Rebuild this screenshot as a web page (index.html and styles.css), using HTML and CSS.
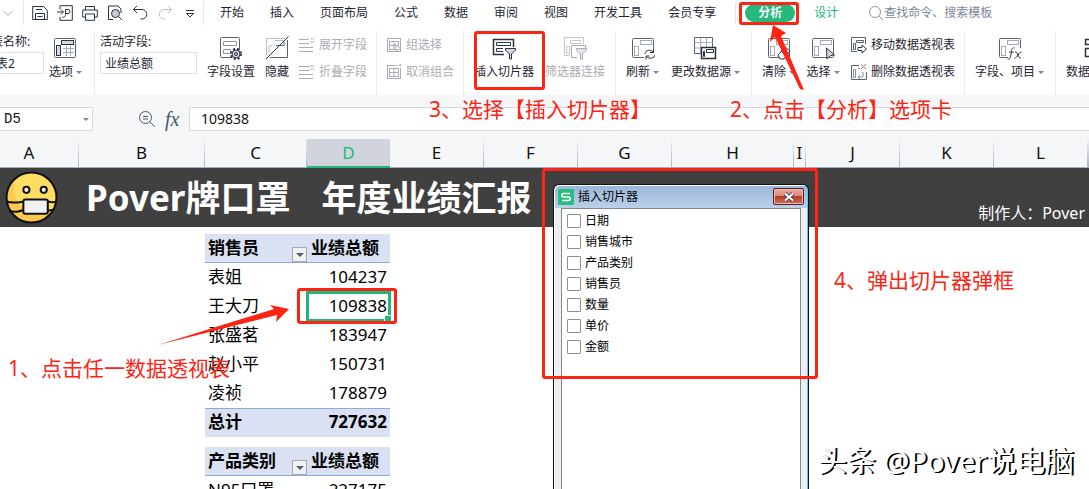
FILE: index.html
```html
<!DOCTYPE html>
<html lang="zh-CN">
<head>
    <meta charset="UTF-8">
    <meta name="viewport" content="width=device-width, initial-scale=1.0">
    <title>Pover牌口罩 年度业绩汇报</title>
    <link rel="stylesheet" href="styles.css">
</head>
<body>
    <!-- shared icons -->
    <svg class="sprite" width="0" height="0">
        <symbol id="pivot" viewBox="0 0 24 24">
            <rect x="1.500" y="2.500" width="21" height="19" rx="1" stroke="#596273"/>
            <rect x="9.500" y="4.500" width="11" height="4" stroke="#a4abb8"/>
            <rect x="3.500" y="10.500" width="4" height="9" stroke="#a4abb8"/>
        </symbol>
        <symbol id="grid-table" viewBox="0 0 16 16">
            <rect x="1.500" y="1.500" width="13" height="13"/>
            <rect x="3.500" y="4.500" width="9" height="8"/>
            <path d="M3.500 8.500h9M8 4.500v8"/>
        </symbol>
    </svg>

    <header class="menu-bar">
        <div class="quick-access">
            <button class="icon-btn small" aria-label="展开"><svg viewBox="0 0 12 16"><path d="M1.500 6 6 10.500 10.500 6" stroke="#a0a5ae"/></svg></button>
            <span class="divider"></span>
            <button class="icon-btn" aria-label="保存"><svg viewBox="0 0 16 16"><path d="M.7 1.500h10.800l3.800 3.800v9.200H.7zM3.500 14.500v-6h9v6M4 4.500h6M5.500 11.500h5"/></svg></button>
            <button class="icon-btn" aria-label="导出"><svg viewBox="0 0 16 16"><path d="M3 4V.7h12.300v14.600H3V12M0 7h6M4 4.500 6.500 7 4 9.500M8.500 9.500V4.500h2.500a2 2 0 0 1 0 4H8.500M8.500 9.500c0 3-2 3-3.500 2.500"/></svg></button>
            <button class="icon-btn" aria-label="打印"><svg viewBox="0 0 16 16"><path d="M3.500 5V1.500h9V5M3.500 12H.7V5h14.600v7h-2.800M3.500 9h9v6.300h-9z"/></svg></button>
            <button class="icon-btn" aria-label="打印预览"><svg viewBox="0 0 16 16"><path d="M6 14.500H1.500V1h9.500l3 3v4"/><circle cx="8.500" cy="8.500" r="4" fill="#c9cdd4"/><path d="m11.500 11.500 3.500 3.500"/></svg></button>
            <button class="icon-btn" aria-label="撤销"><svg viewBox="0 0 16 16"><path d="M5 .8 1.500 4.500 5 8M1.500 4.500H10a4.300 4.300 0 0 1 0 9.500H8.500"/></svg></button>
            <button class="icon-btn" aria-label="恢复" disabled><svg viewBox="0 0 16 16"><path d="m11 .8 3.500 3.700L11 8M14.500 4.500H7a4.300 4.300 0 0 0 0 9.500h1" stroke="#bcc0c7"/></svg></button>
            <button class="icon-btn" aria-label="更多"><svg viewBox="0 0 16 16"><path d="M4 5.500h8M4.500 8.500 8 12l3.500-3.500z"/></svg></button>
            <span class="divider last"></span>
        </div>
        <nav class="tabs">
            <a href="#">开始</a>
            <a href="#">插入</a>
            <a href="#">页面布局</a>
            <a href="#">公式</a>
            <a href="#">数据</a>
            <a href="#">审阅</a>
            <a href="#">视图</a>
            <a href="#">开发工具</a>
            <a href="#">会员专享</a>
        </nav>
        <nav class="tool-tabs">
            <a href="#" class="active">分析<span class="mark"></span></a>
            <a href="#">设计</a>
        </nav>
        <label class="search">
            <svg viewBox="0 0 16 16" width="16" height="16"><circle cx="7" cy="7" r="5.500"/><path d="m11 11 4 4"/></svg>
            <input type="text" placeholder="查找命令、搜索模板">
        </label>
    </header>

    <div class="ribbon">
        <div class="group first">
            <label class="field cut">表名称:<input type="text" value="表2"></label>
            <button class="tool">
                <svg viewBox="0 0 24 24"><rect x="1.500" y="2.500" width="21" height="19" rx="1" stroke="#596273"/><rect x="8.500" y="4.500" width="12" height="4" fill="#d5d8de"/><rect x="3.500" y="9.500" width="4" height="10" fill="#d5d8de"/><path d="M10 12.500h11M10 16.500h11M13.500 10v10M17.500 10v10" stroke="#a4abb8"/></svg>
                <span class="drop">选项</span>
            </button>
        </div>
        <div class="group fields">
            <label class="field">活动字段:<input type="text" value="业绩总额"></label>
            <button class="tool">
                <svg viewBox="0 0 24 24"><rect x="1.500" y="1.500" width="19" height="20" rx="1" stroke="#596273"/><path d="M4.500 5.500h13v4h-13zM4.500 13.500h7v4h-7z" stroke="#8d95a3"/><circle cx="17" cy="18" r="5" fill="#fff" stroke-dasharray="2 2" stroke-width="2"/><circle cx="17" cy="18" r="4" fill="#d5d8de"/><circle cx="17" cy="18" r="1.500"/></svg>
                <span>字段设置</span>
            </button>
            <button class="tool">
                <svg viewBox="0 0 24 24"><path d="M1.500 19V2.500H20M10 4.500h10M4 17v-7h3" stroke="#b9bec8"/><path d="M22.500 4v17.500H5M11 9.500h8V6" stroke="#596273"/><path d="M1 23 23.500 .5"/></svg>
                <span>隐藏</span>
            </button>
            <div class="stack">
                <button class="mini" disabled><svg viewBox="0 0 16 16"><path d="M0 2.500h10M0 6.500h10M0 10.500h14M0 14.500h14M11 .5 13 2.500 15 .5M11 4 13 6 15 4"/></svg>展开字段</button>
                <button class="mini" disabled><svg viewBox="0 0 16 16"><path d="M0 2.500h10M0 6.500h10M0 10.500h14M0 14.500h14M11 3 13 1 15 3M11 6.500 13 4.500 15 6.500"/></svg>折叠字段</button>
            </div>
        </div>
        <div class="group combine">
            <div class="stack">
                <button class="mini" disabled><svg viewBox="0 0 16 16"><use href="#grid-table"/><path d="m9.500 7 5.500 5-2.500.3-2 2.500z" fill="#fff"/></svg>组选择</button>
                <button class="mini" disabled><svg viewBox="0 0 16 16"><use href="#grid-table"/><path d="M12 0v2M14 3h2" stroke="#fff" stroke-width="2"/><path d="m13 2 2-2"/></svg>取消组合</button>
            </div>
        </div>
        <div class="group slicer">
            <button class="tool">
                <svg viewBox="0 0 24 24"><path d="M12 18.500H1.500v-15h20V11" stroke-width="1.500"/><path d="M4.500 6.500h14v3h-14zM11 12.500H4.500v3H11"/><path d="M13.500 12.500h10v1.500l-4 4v5h-2v-5l-4-4z" fill="#d5d8de"/></svg>
                <span>插入切片器</span>
                <i class="mark"></i>
            </button>
            <button class="tool" disabled>
                <svg viewBox="0 0 24 24"><path d="M7 19.500H1.500v-18h19V8M7.500 4.500h10v3h-10zM3.500 10.500h3v7h-3z" stroke="#c3c6cc"/><path d="M14 21.500H8.500v-12h14V12"/><path d="M13.500 12.500h10v1.500l-4 4v5h-2v-5l-4-4z" fill="#e3e5e9"/></svg>
                <span>筛选器连接</span>
            </button>
        </div>
        <div class="group source">
            <button class="tool">
                <svg viewBox="0 0 24 24"><use href="#pivot"/><path d="M13 13h11v11H13z" fill="#fff" stroke="none"/><path d="M14 18c0-4 6-5 8-2M22.500 13v3.500H19M24 18.500c0 4-6 5-8.500 2M15 23.500V20h3.500"/></svg>
                <span class="drop">刷新</span>
            </button>
            <button class="tool">
                <svg viewBox="0 0 24 24"><path d="M1.500 1.500h18v16h-18z" stroke="#596273"/><path d="M1.500 6.500h18M1.500 12h18M7.500 1.500v16M13.500 1.500v16" stroke="#a4abb8"/><path d="M8.500 11.500h14v11h-14z" fill="#fff" stroke-width="1.500"/><path d="M13.500 13.500h7v3h-7zM10.500 15.500h1v5h-1z"/></svg>
                <span class="drop">更改数据源</span>
            </button>
        </div>
        <div class="group actions">
            <button class="tool">
                <svg viewBox="0 0 24 24"><use href="#pivot"/><path d="m11 19 7-8 5 4-6 8h-4z" fill="#fff"/><path d="m14 15 6 5"/></svg>
                <span class="drop">清除</span>
            </button>
            <button class="tool">
                <svg viewBox="0 0 24 24"><use href="#pivot"/><path d="m15.500 12 8 7-4 .5-3.500 3.500z" fill="#d5d8de"/></svg>
                <span class="drop">选择</span>
            </button>
            <div class="stack">
                <button class="mini"><svg viewBox="0 0 16 16"><path d="M6 14.500H.5V.5h14V7M5.500 3.500h7v2h-7zM2.500 6.500h2v6h-2z" stroke="#596273"/><path d="M7 10.500h4V8l4.500 4-4.500 4v-2.500H7z"/></svg>移动数据透视表</button>
                <button class="mini"><svg viewBox="0 0 16 16"><path d="M8 1.500H.5v14h15V8" stroke="#596273"/><path d="M2.500 5.500h2v8h-2zM7 4.500h2M7 13h5V8M9 11l-2 2 2 2" stroke="#8d95a3"/><path d="m10 0 5 5m0-5-5 5" stroke="#e0696b"/></svg>删除数据透视表</button>
            </div>
        </div>
        <div class="group items">
            <button class="tool">
                <svg viewBox="0 0 24 24"><use href="#pivot"/><path d="M10 12h14v12H10z" fill="#fff" stroke="none"/><path d="M16.500 12c-3-1-3 3-3.500 6s-1 6-3.500 5M11 16h5M17 16c4 0 2 6 6 6M23.500 16c-3 0-4 6-7 6"/></svg>
                <span class="drop">字段、项目</span>
            </button>
        </div>
        <div class="group data">
            <button class="tool">
                <svg viewBox="0 0 24 24"><path d="M1.500 3.500h9v5h-9zM1.500 12.500h9v8h-9z" stroke-width="1.500"/></svg>
                <span>数据透视图</span>
            </button>
        </div>
    </div>

    <div class="formula-bar">
        <div class="name-box"><input type="text" value="D5" aria-label="名称框"></div>
        <div class="formula-tools">
            <svg viewBox="0 0 18 18" width="18" height="18"><circle cx="7.500" cy="7.500" r="6"/><path d="m12 12 5 5M5 6.500h5M5 9h5"/></svg>
            <em>fx</em>
        </div>
        <input class="formula" type="text" value="109838" aria-label="编辑栏">
    </div>

    <div class="columns">
        <span>A</span><span>B</span><span>C</span><span class="current">D</span><span>E</span><span>F</span><span>G</span><span>H</span><span>I</span><span>J</span><span>K</span><span>L</span><span></span>
    </div>

    <main class="sheet">
        <div class="banner">
            <svg class="face" viewBox="0 0 52 52">
                <circle cx="26" cy="26" r="24.500" fill="#ffdc64"/>
                <path d="M10 8C-3 20 0 44 19 49.500c9 2 18 0 23-6C22 46 4 30 10 8z" fill="#ffc850"/>
                <circle cx="26" cy="26" r="24.500" fill="none" stroke="#111" stroke-width="2"/>
                <circle cx="21" cy="18.500" r="3" fill="#fff" stroke="#111" stroke-width="2"/>
                <circle cx="38" cy="18.500" r="3" fill="#fff" stroke="#111" stroke-width="2"/>
                <path d="M1.500 30c6 2 10 1 17 0M4 39c6 2 9 1 15-1M42 30c4 1 6 1 8 0M42 39l5-1" fill="none" stroke="#111" stroke-width="2"/>
                <rect x="18" y="28" width="24" height="14" rx="2" fill="#f1f1f5" stroke="#111" stroke-width="2"/>
            </svg>
            <h1><span>Pover牌口罩</span><span>年度业绩汇报</span></h1>
            <p>制作人：Pover</p>
        </div>

        <table class="pivot">
            <thead>
                <tr><th>销售员<button class="filter" aria-label="筛选"></button></th><th>业绩总额</th></tr>
            </thead>
            <tbody>
                <tr><td>表姐</td><td>104237</td></tr>
                <tr><td>王大刀</td><td class="selected">109838<span class="mark"></span></td></tr>
                <tr><td>张盛茗</td><td>183947</td></tr>
                <tr><td>赵小平</td><td>150731</td></tr>
                <tr><td>凌祯</td><td>178879</td></tr>
            </tbody>
            <tfoot>
                <tr><td>总计</td><td>727632</td></tr>
            </tfoot>
        </table>

        <table class="pivot">
            <thead>
                <tr><th>产品类别<button class="filter" aria-label="筛选"></button></th><th>业绩总额</th></tr>
            </thead>
            <tbody>
                <tr><td>N95口罩</td><td>227175</td></tr>
            </tbody>
        </table>
    </main>

    <section class="dialog">
        <div class="title-bar">
            <svg viewBox="0 0 16 16" width="16" height="16"><rect width="16" height="16" rx="1" fill="#27bd83"/><path d="M12 4.500H5.500a1.700 1.700 0 0 0 0 3.500h5a1.700 1.700 0 0 1 0 3.500H4" fill="none" stroke="#fff" stroke-width="1.500"/></svg>
            <h2>插入切片器</h2>
            <button class="close" aria-label="关闭"><svg viewBox="0 0 12 10" width="12" height="10"><path d="m2 1.500 8 7m0-7-8 7" stroke="#4b4b55" stroke-width="4"/><path d="m2 1.500 8 7m0-7-8 7" stroke="#fff" stroke-width="2"/></svg></button>
        </div>
        <div class="options">
            <label><input type="checkbox">日期</label>
            <label><input type="checkbox">销售城市</label>
            <label><input type="checkbox">产品类别</label>
            <label><input type="checkbox">销售员</label>
            <label><input type="checkbox">数量</label>
            <label><input type="checkbox">单价</label>
            <label><input type="checkbox">金额</label>
        </div>
        <span class="mark"></span>
    </section>

    <!-- tutorial steps -->
    <p class="step step-1">1、点击任一数据透视表</p>
    <p class="step step-2">2、点击【分析】选项卡</p>
    <p class="step step-3">3、选择【插入切片器】</p>
    <p class="step step-4">4、弹出切片器弹框</p>
    <svg class="arrow arrow-1" viewBox="0 0 132 42"><path d="M0 41 116 5 112 1 131 5 118 18 119 11z"/></svg>
    <svg class="arrow arrow-2" viewBox="0 0 36 66"><path d="M4 0 17 8 12 11 35 65 31 64 6 12 1 17z"/></svg>

    <p class="watermark">头条 @Pover说电脑</p>
</body>
</html>
```
FILE: styles.css
```css
* {
    box-sizing: border-box;
}
body {
    margin: 0;
    position: relative;
    height: 100vh;
    overflow: hidden;
    background: #fff;
    color: #1f2633;
    font: 12px/16px "Noto Sans", "Noto Sans CJK SC", sans-serif;
}
h1, h2, p {
    margin: 0;
}
button, input {
    font: inherit;
    color: inherit;
    padding: 0;
    border: 0;
    background: none;
}
button {
    white-space: nowrap;
}
a {
    color: inherit;
    text-decoration: none;
}
svg {
    display: block;
    flex: none;
}
.sprite {
    position: absolute;
}

/* red frame round a control */
.mark {
    position: absolute;
    border: 3px solid #fe2413;
    border-radius: 3px;
    pointer-events: none;
    z-index: 2;
}

/* top menu */
.menu-bar {
    display: flex;
    align-items: center;
    height: 25px;
    margin-bottom: 6px;
    white-space: nowrap;
}
.quick-access {
    display: flex;
    align-items: center;
    gap: 9px;
    padding-left: 2px;
}
.icon-btn svg {
    width: 16px;
    height: 16px;
    fill: none;
    stroke: #2b3342;
}
.icon-btn.small svg {
    width: 12px;
}
.divider {
    width: 1px;
    height: 24px;
    margin-right: -1px;
    background: #e3e5e8;
}
.divider.last {
    margin: 0 0 0 -4px;
}
.tabs {
    display: flex;
    gap: 26px;
    padding: 0 19px 0 16px;
}
.tool-tabs {
    display: flex;
    align-items: center;
    gap: 19px;
    height: 22px;
    padding-left: 9px;
    border-left: 1px solid #e3e5e8;
    color: #20b878;
}
.tool-tabs .active {
    position: relative;
    padding: 1px 13px;
    border-radius: 9px;
    background: #22b97b;
    color: #fff;
    font-weight: bold;
}
.tool-tabs .mark {
    inset: -2px -4px -3px -6px;
}
.search {
    display: flex;
    align-items: center;
    flex: 1;
    padding-left: 30px;
}
.search svg {
    fill: none;
    stroke: #8a93a5;
}
.search input {
    flex: 1;
    min-width: 0;
}
.search input::placeholder {
    color: #7d879b;
    opacity: 1;
}

/* ribbon */
.ribbon {
    display: flex;
    height: 64px;
}
.group {
    display: flex;
    flex: none;
    justify-content: space-between;
    border-right: 1px solid #e9ebee;
}
.group.first {
    width: 95px;
    padding-right: 12px;
}
.group.fields {
    width: 282px;
    padding: 0 9px 0 5px;
}
.group.combine {
    width: 87px;
    padding-left: 9px;
}
.group.slicer {
    width: 152px;
    padding: 0 10px;
}
.group.source {
    width: 136px;
    padding: 0 11px 0 10px;
}
.group.actions {
    width: 213px;
    padding: 0 9px 0 10px;
}
.group.items {
    width: 91px;
    padding-left: 10px;
}
.group.data {
    padding-left: 10px;
    border-right: 0;
}
.field {
    display: flex;
    flex-direction: column;
    width: 97px;
    padding-top: 2px;
    line-height: 18px;
}
.field.cut {
    width: 53px;
    margin-left: -9px;
}
.field input {
    width: 100%;
    height: 22px;
    margin-top: 1px;
    padding-left: 4px;
    border: 1px solid #dfe1e5;
}
.tool {
    position: relative;
    display: flex;
    flex-direction: column;
    align-items: center;
    gap: 4px;
    height: 49px;
    padding-top: 5px;
}
.tool svg {
    width: 24px;
    height: 24px;
    fill: none;
    stroke: #2b3342;
}
.tool .mark {
    inset: 0 -11px -10px 0;
}
.tool:disabled,
.mini:disabled {
    color: #a9acb2;
}
.tool:disabled svg,
.mini:disabled svg {
    stroke: #a9acb2;
}
.drop {
    display: flex;
    align-items: center;
    gap: 3px;
}
.drop::after {
    content: "";
    border: 3px solid transparent;
    border-top-color: #7c879c;
    border-bottom: 0;
}
.stack {
    display: flex;
    flex-direction: column;
    gap: 11px;
    padding-top: 6px;
}
.mini {
    display: flex;
    align-items: center;
    gap: 4px;
    height: 16px;
}
.mini svg {
    width: 16px;
    height: 16px;
    fill: none;
    stroke: #2b3342;
}

/* formula bar */
.formula-bar {
    display: flex;
    height: 36px;
    padding-top: 12px;
    background: #f5f6f8;
    color: #111;
    font-size: 14px;
}
.name-box {
    position: relative;
    width: 93px;
    border: 1px solid #d5d8de;
    border-left: 0;
    border-radius: 0 2px 2px 0;
    background: #fff;
}
.name-box input {
    width: 80px;
    height: 22px;
    padding-left: 4px;
    font-family: "Liberation Mono", monospace;
}
.name-box::after {
    content: "";
    position: absolute;
    right: 3px;
    top: 10px;
    border: 3px solid transparent;
    border-top-color: #7c879c;
    border-bottom: 0;
}
.formula-tools {
    display: flex;
    align-items: center;
    gap: 9px;
    width: 96px;
    padding-left: 45px;
}
.formula-tools svg {
    fill: none;
    stroke: #4d5668;
}
.formula-tools em {
    color: #4d5668;
    font: italic 20px/20px "Liberation Serif", serif;
}
.formula {
    flex: 1;
    min-width: 0;
    padding-left: 11px;
    border: 1px solid #d5d8de;
    border-right: 0;
    border-radius: 2px 0 0 2px;
    background: #fff;
}

/* sheet */
.columns {
    display: grid;
    grid-template-columns: 79px 126px 102px 83px 94px 94px 94px 122px 12px 94px 94px 94px 1fr;
    height: 37px;
    padding-top: 8px;
    border-bottom: 1px solid #a3adc2;
    background: #f5f6f8;
    color: #111;
    font-size: 17px;
    line-height: 28px;
    text-align: center;
}
.columns span {
    border-right: 1px solid;
    border-image: linear-gradient(#f5f6f8, #a3adc2) 1;
}
/* column A is partly scrolled out */
.columns span:first-child {
    padding-right: 20px;
}
.columns .current {
    height: 29px;
    border: 0;
    border-bottom: 2px solid #20b878;
    background: #d0d4dc;
    color: #20b878;
}
.banner {
    display: flex;
    align-items: center;
    height: 59px;
    padding: 0 4px 0 5px;
    margin-bottom: 7px;
    background: #404040;
    color: #fff;
    white-space: nowrap;
}
.face {
    width: 53px;
    height: 53px;
}
.banner h1 {
    display: flex;
    gap: 31px;
    margin-left: 28px;
    font-size: 35px;
    line-height: 59px;
}
.banner p {
    margin-left: auto;
    align-self: flex-end;
    font-size: 16px;
    line-height: 28px;
}
.pivot {
    width: 185px;
    margin: 0 0 10px 205px;
    border-spacing: 0;
    table-layout: fixed;
    color: #000;
    font-size: 17px;
    line-height: 26px;
}
.pivot th,
.pivot td {
    position: relative;
    height: 29px;
    padding: 0 3px 2px;
    text-align: left;
    white-space: nowrap;
}
.pivot th {
    padding: 1px 4px;
    border-bottom: 1px solid #8ea9db;
    background: #d9e1f2;
}
.pivot th:first-child {
    width: 102px;
    padding-left: 3px;
}
.pivot td + td {
    text-align: right;
}
.pivot tfoot td {
    border-top: 1px solid #8ea9db;
    background: #d9e1f2;
    font-weight: bold;
}
.filter {
    position: absolute;
    right: 0;
    bottom: 0;
    width: 15px;
    height: 15px;
    border: 1px solid #a5a9b1;
    background: #f0f1f3;
}
.filter::after {
    content: "";
    position: absolute;
    left: 3px;
    top: 5px;
    border: 4px solid transparent;
    border-top-color: #595f6a;
    border-bottom: 0;
}
.pivot .selected {
    outline: 3px solid #20b878;
    outline-offset: -2px;
}
.selected::after {
    content: "";
    position: absolute;
    right: -2px;
    bottom: -2px;
    width: 6px;
    height: 6px;
    border: 1px solid #fff;
    background: #20b878;
}
.selected .mark {
    inset: -4px -7px -3px -10px;
}

/* slicer window */
.dialog {
    position: absolute;
    left: 553px;
    top: 184px;
    bottom: 0;
    width: 256px;
    display: flex;
    flex-direction: column;
    padding: 0 7px;
    border: 1px solid #111;
    border-bottom: 0;
    border-radius: 6px 6px 0 0;
    background: linear-gradient(#9ab5d6, #b9d0ea 23px, #eceef1 23px);
    box-shadow: inset 1px 1px #fff, inset -1px 0 #5fc8ea;
    color: #000;
}
.title-bar {
    display: flex;
    align-items: center;
    gap: 4px;
    height: 23px;
    margin: 0 -3px;
}
.title-bar h2 {
    flex: 1;
    font-size: 12px;
    font-weight: normal;
}
.close {
    display: flex;
    align-items: center;
    justify-content: center;
    width: 31px;
    height: 17px;
    border: 1px solid #5b1c22;
    border-radius: 2px;
    background: linear-gradient(#e9aba0, #dd8577 48%, #b93a26 50%, #d0705c);
    box-shadow: inset 0 0 0 1px #eab9b0;
}
.options {
    flex: 1;
    padding: 1px 5px;
    border: 1px solid #828790;
    border-bottom: 0;
    background: #fff;
}
.options label {
    display: flex;
    align-items: center;
    gap: 4px;
    height: 21px;
}
.options input {
    appearance: none;
    width: 14px;
    height: 14px;
    margin: 0;
    border: 1px solid #8e8f8f;
    border-radius: 1px;
    background: #fff;
}
.dialog .mark {
    left: -12px;
    top: -17px;
    width: 276px;
    height: 211px;
}

/* notes */
.step {
    position: absolute;
    color: #fe2413;
    font-size: 21px;
    line-height: 28px;
    white-space: nowrap;
    z-index: 3;
}
.step-1 {
    left: 8px;
    top: 354px;
}
.step-2 {
    left: 730px;
    top: 95px;
}
.step-3 {
    left: 429px;
    top: 95px;
}
.step-4 {
    left: 834px;
    top: 266px;
}
.arrow {
    position: absolute;
    fill: #fe2413;
    z-index: 3;
}
.arrow-1 {
    left: 158px;
    top: 304px;
    width: 132px;
    height: 42px;
}
.arrow-2 {
    left: 769px;
    top: 25px;
    width: 36px;
    height: 66px;
}
.watermark {
    position: absolute;
    right: 15px;
    bottom: 10px;
    color: #fff;
    font-size: 29px;
    line-height: 36px;
    text-shadow: 2px 1px #000;
    white-space: nowrap;
}
```
